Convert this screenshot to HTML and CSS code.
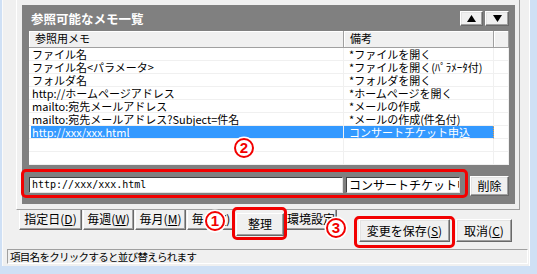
FILE: index.html
```html
<!DOCTYPE html>
<html lang="ja">
<head>
<meta charset="utf-8">
<title>メモ一覧</title>
<link rel="stylesheet" href="styles.css">
</head>
<body>
<div class="win">
  <div class="tabframe">
    <div class="panel">
      <div class="titlerow">
        <div class="title">参照可能なメモ一覧</div>
        <div class="arrows">
          <div class="btn abtn up"><svg width="9" height="7" viewBox="0 0 9 7"><polygon points="0,7 4.5,0 9,7" fill="#000"/></svg></div>
          <div class="btn abtn down"><svg width="9" height="7" viewBox="0 0 9 7"><polygon points="0,0 9,0 4.5,7" fill="#000"/></svg></div>
        </div>
      </div>
      <div class="list">
        <div class="hdr">
          <div class="hc c1">参照用メモ</div>
          <div class="hc c2">備考</div>
          <div class="hc c3"></div>
        </div>
        <div class="row"><div class="cell c1">ファイル名</div><div class="cell c2">*ファイルを開く</div><div class="cell c3"></div></div>
        <div class="row"><div class="cell c1">ファイル名&lt;パラメータ&gt;</div><div class="cell c2">*ファイルを開く(ﾊﾟﾗﾒｰﾀ付)</div><div class="cell c3"></div></div>
        <div class="row"><div class="cell c1">フォルダ名</div><div class="cell c2">*フォルダを開く</div><div class="cell c3"></div></div>
        <div class="row"><div class="cell c1">http://ホームページアドレス</div><div class="cell c2">*ホームページを開く</div><div class="cell c3"></div></div>
        <div class="row"><div class="cell c1">mailto:宛先メールアドレス</div><div class="cell c2">*メールの作成</div><div class="cell c3"></div></div>
        <div class="row"><div class="cell c1">mailto:宛先メールアドレス?Subject=件名</div><div class="cell c2">*メールの作成(件名付)</div><div class="cell c3"></div></div>
        <div class="row sel"><div class="cell c1">http://xxx/xxx.html</div><div class="cell c2">コンサートチケット申込</div><div class="cell c3"></div></div>
        <div class="row"><div class="cell c1"></div><div class="cell c2"></div><div class="cell c3"></div></div>
        <div class="row"><div class="cell c1"></div><div class="cell c2"></div><div class="cell c3"></div></div>
      </div>
      <div class="editrow">
        <div class="inp i1">http://xxx/xxx.html</div>
        <div class="inp i2">コンサートチケット申込</div>
        <div class="btn del">削除</div>
      </div>
    </div>
  </div>
  <div class="bottom">
    <div class="tabs">
      <div class="tab t1">指定日(<u>D</u>)</div>
      <div class="tab t2">毎週(<u>W</u>)</div>
      <div class="tab t3">毎月(<u>M</u>)</div>
      <div class="tab t4">毎年(<u>Y</u>)</div>
      <div class="tab t5 active">整理</div>
      <div class="tab t6">環境設定</div>
    </div>
    <div class="btns">
      <div class="btn save">変更を保存(<u>S</u>)</div>
      <div class="btn cancel">取消(<u>C</u>)</div>
    </div>
  </div>
  <div class="status">項目名をクリックすると並び替えられます</div>
</div>
<div class="hl hl-edit"></div>
<div class="hl hl-seiri"></div>
<div class="hl hl-save"></div>
<span class="mark m1">1</span>
<span class="mark m2">2</span>
<span class="mark m3">3</span>
</body>
</html>
```
FILE: styles.css
```css
* { box-sizing: border-box; margin: 0; padding: 0; }
body {
  margin: 0;
  width: 537px;
  height: 274px;
  overflow: hidden;
  position: relative;
  background: #cfe0f5;
  font-family: "Noto Sans CJK JP", "Noto Sans", sans-serif;
  color: #000;
}
.win {
  margin-left: 2px;
  width: 528px;
  height: 266px;
  background: #f0f0f0;
  border-left: 1px solid #fafafa;
  border-right: 1px solid #fff;
  display: flex;
  flex-direction: column;
}
.tabframe {
  margin-left: 13px;
  width: 504px;
  height: 210px;
  flex: none;
  border-left: 1px solid #fff;
  border-right: 1px solid #a0a0a0;
  border-bottom: 1px solid #a0a0a0;
  padding: 5px 4px 5px 5px;
}
.panel {
  width: 493px;
  height: 199px;
  background: #808080;
  padding: 0 6px 0 7px;
  display: flex;
  flex-direction: column;
}
.titlerow {
  height: 26px;
  flex: none;
  display: flex;
  justify-content: space-between;
  align-items: flex-start;
}
.title {
  margin: 6px 0 0 2px;
  color: #fff;
  font-weight: bold;
  font-size: 12.5px;
  line-height: 16px;
}
.arrows {
  margin-top: 6px;
  display: flex;
  gap: 2px;
}
.btn {
  background: #f0f0f0;
  border: 1px solid;
  border-color: #fff #696969 #696969 #fff;
  box-shadow: inset -1px -1px 0 #a0a0a0, inset 1px 1px 0 #e3e3e3;
  display: flex;
  align-items: center;
  justify-content: center;
  font-size: 12px;
  line-height: 14px;
  white-space: nowrap;
}
.abtn { height: 15px; }
.abtn.up { width: 23px; }
.abtn.down { width: 24px; }
.abtn svg { display: block; }

.list {
  height: 134px;
  flex: none;
  background: #fff;
  display: flex;
  flex-direction: column;
  overflow: hidden;
}
.hdr {
  display: flex;
  height: 17px;
  flex: none;
}
.hc {
  height: 17px;
  background: #f0f0f0;
  border-right: 1px solid #a0a0a0;
  border-bottom: 1px solid #a0a0a0;
  box-shadow: inset 1px 1px 0 #fff;
  font-size: 11px;
  line-height: 15px;
  padding-left: 6px;
  white-space: nowrap;
}
.c1 { width: 315px; flex: none; }
.c2 { width: 150px; flex: none; }
.c3 { width: 15px; flex: none; }
.row {
  display: flex;
  height: 13px;
  flex: none;
}
.cell {
  height: 13px;
  border-bottom: 1px solid #f0f0f0;
  border-right: 1px solid #f0f0f0;
  font-size: 11px;
  line-height: 12px;
  white-space: nowrap;
}
.cell.c1 { padding-left: 3px; }
.cell.c2 { padding-left: 5px; }
.row.sel .c1, .row.sel .c2 {
  background: #3399ff;
  color: #fff;
}
.row.sel .c1 { box-shadow: inset 2px 0 0 #fff; }
.row.sel .c2 { border-right: 1px dotted #f0a040; }

.editrow {
  margin-top: 11px;
  height: 20px;
  display: flex;
  align-items: flex-start;
}
.inp {
  height: 16px;
  margin-top: 1px;
  background: #fff;
  border: 1px solid;
  border-color: #404040 #e3e3e3 #e3e3e3 #404040;
  white-space: nowrap;
  overflow: hidden;
}
.i1 {
  width: 314px;
  font-family: "DejaVu Sans Mono", "Liberation Mono", monospace;
  font-size: 10px;
  line-height: 14px;
  padding-left: 2px;
}
.i2 {
  width: 114px;
  margin-left: 3px;
  font-size: 12px;
  line-height: 14px;
  padding-left: 2px;
}
.del {
  margin-left: auto;
  width: 39px;
  height: 20px;
}

.bottom {
  height: 32px;
  flex: none;
  display: flex;
}
.tabs {
  margin-left: 16px;
  display: flex;
  gap: 1px;
  align-items: flex-start;
}
.tab {
  height: 20px;
  background: #f0f0f0;
  border-left: 1px solid #fff;
  border-right: 1px solid #696969;
  border-bottom: 1px solid #696969;
  box-shadow: inset -1px -1px 0 #a0a0a0;
  font-size: 12px;
  line-height: 18px;
  text-align: center;
  white-space: nowrap;
}
.t1 { width: 63px; }
.t2 { width: 51px; }
.t3 { width: 51px; }
.t4 { width: 48px; }
.t5 { width: 48px; }
.t6 { width: 52px; }
.tab.active {
  height: 23px;
  margin-top: 3px;
  border-top: 1px solid #fff;
  line-height: 19px;
}
.btns {
  margin-left: auto;
  margin-right: 17px;
  margin-top: 9px;
  display: flex;
  gap: 6px;
  align-items: flex-start;
}
.save { width: 91px; height: 23px; }
.cancel { width: 56px; height: 23px; }

.status {
  margin: 7px 0 0 4px;
  width: 521px;
  height: 15px;
  flex: none;
  border-top: 1px solid #a0a0a0;
  border-left: 1px solid #a0a0a0;
  border-right: 1px solid #fff;
  border-bottom: 1px solid #fff;
  font-size: 10.5px;
  letter-spacing: -0.7px;
  line-height: 13px;
  padding-left: 2px;
  white-space: nowrap;
}

.hl {
  position: absolute;
  border: 3px solid #f20000;
  border-radius: 5px;
}
.hl-edit { left: 21px; top: 169px; width: 447px; height: 29px; }
.hl-seiri { left: 232px; top: 207px; width: 55px; height: 33px; }
.hl-save { left: 354px; top: 216px; width: 101px; height: 32px; }

.mark {
  position: absolute;
  width: 20px;
  height: 20px;
  border-radius: 50%;
  border: 2.5px solid #f20000;
  background: #fff;
  box-shadow: 0 0 0 1.5px #fff;
  color: #f20000;
  font-family: "Liberation Sans", "DejaVu Sans", sans-serif;
  font-weight: bold;
  font-size: 15px;
  line-height: 15px;
  text-align: center;
}
.m1 { left: 205px; top: 211px; }
.m2 { left: 234px; top: 138px; }
.m3 { left: 326px; top: 218px; }
```
